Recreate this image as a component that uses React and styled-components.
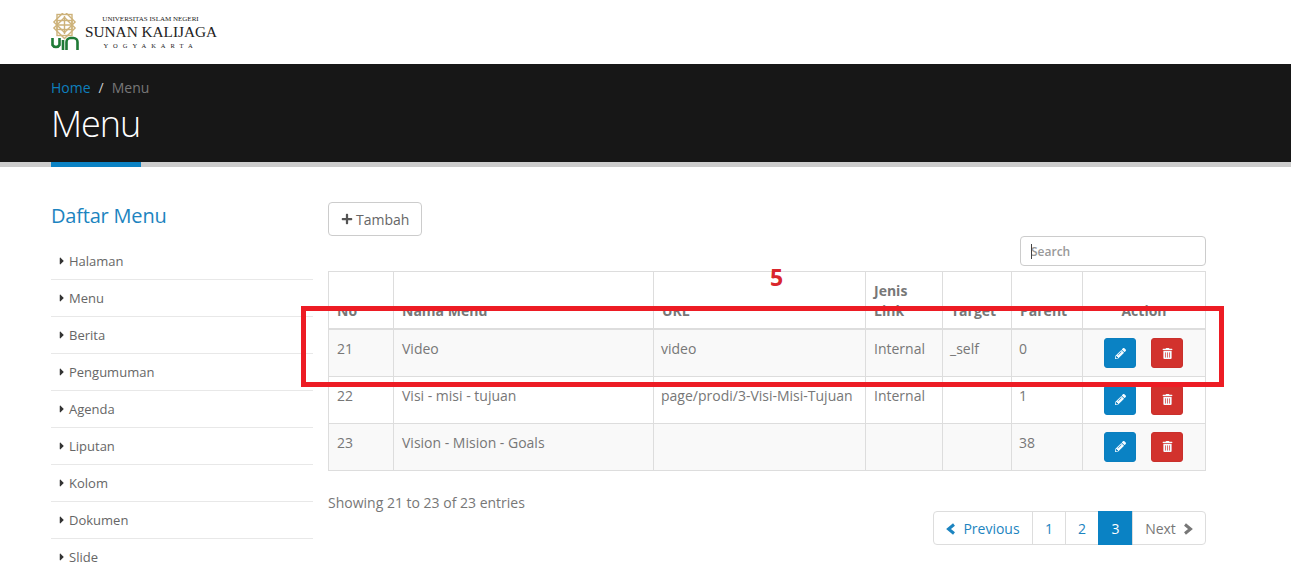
import React from "react";
import styled, { createGlobalStyle } from "styled-components";
import { FaCaretRight, FaPencilAlt, FaPlus, FaTrashAlt } from "react-icons/fa";

const GlobalStyle = createGlobalStyle`
  html, body {
    margin: 0;
    height: 566px;
    overflow: hidden;
    background: #fff;
    font-family: "Open Sans", "Liberation Sans", sans-serif;
    color: #777;
  }
`;

const Page = styled.div`
  position: relative;
  width: 1291px;
  height: 566px;
  overflow: hidden;
`;

const TopBar = styled.header`
  height: 64px;
  padding: 13px 0 0 51px;
  box-sizing: border-box;
  display: flex;
  align-items: flex-start;
  gap: 6px;
`;

const LogoText = styled.div`
  font-family: "Liberation Serif", serif;
  color: #222;
  text-align: center;
  width: 131px;
  padding-top: 1px;
`;

const LogoLine = styled.div`
  font-size: ${(p) => p.$size}px;
  line-height: ${(p) => p.$height}px;
  letter-spacing: ${(p) => p.$spacing || 0}px;
  white-space: nowrap;
`;

const Band = styled.section`
  height: 103px;
  box-sizing: border-box;
  background: #171717;
  border-bottom: 5px solid #ccc;
  padding: 14px 0 0 51px;
`;

const Breadcrumb = styled.div`
  font-size: 14px;
  line-height: 20px;
  color: #777;
  display: flex;
  gap: 8px;
`;

const HomeLink = styled.a`
  color: #0e7fbd;
`;

const Slash = styled.span`
  color: #ccc;
`;

const Title = styled.h1`
  margin: 0;
  width: 90px;
  height: 69px;
  box-sizing: border-box;
  padding-top: 1px;
  border-bottom: 5px solid #0b82c4;
  font-size: 36px;
  line-height: 50px;
  font-weight: 300;
  letter-spacing: -1px;
  color: #fff;
  white-space: nowrap;
`;

const Body = styled.main`
  display: flex;
  padding: 35px 85px 0 51px;
  gap: 15px;
`;

const Sidebar = styled.aside`
  width: 262px;
  flex: none;
`;

const SideTitle = styled.h2`
  margin: 0 0 13px;
  font-size: 20px;
  line-height: 28px;
  font-weight: 400;
  letter-spacing: -0.2px;
  color: #1c84c0;
`;

const SideItem = styled.div`
  height: 37px;
  box-sizing: border-box;
  border-bottom: 1px solid #e8e8e8;
  padding-left: 5px;
  display: flex;
  align-items: center;
  gap: 1px;
  font-size: 13px;
  color: #666;
  svg {
    font-size: 12px;
    color: #333;
  }
`;

const Content = styled.div`
  flex: 1;
  min-width: 0;
`;

const AddButton = styled.button`
  display: flex;
  align-items: center;
  gap: 3px;
  width: 94px;
  height: 34px;
  box-sizing: border-box;
  padding: 0 0 0 12px;
  background: #fff;
  border: 1px solid #ccc;
  border-radius: 4px;
  font: 400 14px "Open Sans", sans-serif;
  color: #666;
  svg {
    font-size: 12px;
    color: #555;
  }
`;

const SearchRow = styled.div`
  display: flex;
  justify-content: flex-end;
  height: 35px;
`;

const SearchWrap = styled.div`
  position: relative;
  width: 186px;
  height: 30px;
`;

const SearchBox = styled.input`
  width: 100%;
  height: 100%;
  box-sizing: border-box;
  padding: 0 10px;
  border: 1px solid #ccc;
  border-radius: 4px;
  background: #fff;
  font: 600 12px "Open Sans", sans-serif;
  &::placeholder {
    color: #999;
    opacity: 1;
  }
`;

const Caret = styled.span`
  position: absolute;
  left: 11px;
  top: 8px;
  width: 1px;
  height: 15px;
  background: #444;
`;

const Table = styled.table`
  width: 877px;
  table-layout: fixed;
  border-collapse: collapse;
  font-size: 14px;
`;

const HeadCell = styled.th`
  width: ${(p) => p.$width}px;
  height: 56px;
  box-sizing: border-box;
  padding: 9px 8px 7px;
  border: 1px solid #ddd;
  border-bottom: 2px solid #ddd;
  line-height: 20px;
  font-weight: 700;
  color: #777;
  text-align: ${(p) => (p.$center ? "center" : "left")};
  vertical-align: bottom;
`;

const Row = styled.tr`
  background: ${(p) => (p.$odd ? "#f9f9f9" : "#fff")};
`;

const Cell = styled.td`
  height: 47px;
  box-sizing: border-box;
  padding: 9px ${(p) => (p.$wide ? 8 : 7)}px;
  border: 1px solid #ddd;
  line-height: 20px;
  vertical-align: top;
  white-space: nowrap;
  color: #777;
`;

const ActionCell = styled(Cell)`
  padding: 8px 0 0 21px;
`;

const Actions = styled.div`
  display: flex;
  gap: 15px;
`;

const IconButton = styled.button`
  width: 32px;
  height: 30px;
  padding: 0;
  border: 1px solid ${(p) => (p.$danger ? "#c9302c" : "#0b7fbf")};
  border-radius: 3px;
  background: ${(p) => (p.$danger ? "#d2322d" : "#0a82c4")};
  color: #f4fbff;
  display: flex;
  align-items: center;
  justify-content: center;
  svg {
    font-size: 11px;
  }
`;

const Footer = styled.div`
  margin-top: 22px;
  height: 18px;
  font-size: 14px;
  line-height: 20px;
`;

const Pagination = styled.nav`
  display: flex;
  justify-content: flex-end;
`;

const PageItem = styled.a`
  display: flex;
  align-items: center;
  justify-content: center;
  gap: 7px;
  width: ${(p) => p.$width}px;
  height: 34px;
  box-sizing: border-box;
  padding-top: 2px;
  margin-left: -1px;
  border: 1px solid ${(p) => (p.$active ? "#0a82c4" : "#ddd")};
  background: ${(p) => (p.$active ? "#0a82c4" : "#fff")};
  color: ${(p) => (p.$active ? "#fff" : p.$muted ? "#777" : "#1c84c0")};
  font-size: 14px;
  border-radius: ${(p) => p.$radius || "0"};
`;

const Annotation = styled.div`
  position: absolute;
  left: 301px;
  top: 306px;
  width: 923px;
  height: 81px;
  box-sizing: border-box;
  border: 5px solid #ed1c24;
`;

const AnnotationLabel = styled.div`
  position: absolute;
  left: 770px;
  top: 261px;
  font-size: 23px;
  line-height: 32px;
  font-weight: 700;
  color: #d9262c;
`;

const menuItems = ["Halaman", "Menu", "Berita", "Pengumuman", "Agenda", "Liputan", "Kolom", "Dokumen", "Slide"];

const columns = [
  { label: "No", width: 65 },
  { label: "Nama Menu", width: 260 },
  { label: "URL", width: 212 },
  { label: "Jenis Link", width: 77 },
  { label: "Target", width: 69 },
  { label: "Parent", width: 71 },
  { label: "Action", width: 123, center: true },
];

const rows = [
  { no: 21, name: "Video", url: "video", type: "Internal", target: "_self", parent: 0 },
  { no: 22, name: "Visi - misi - tujuan", url: "page/prodi/3-Visi-Misi-Tujuan", type: "Internal", target: "", parent: 1 },
  { no: 23, name: "Vision - Mision - Goals", url: "", type: "", target: "", parent: 38 },
];

function LogoMark() {
  return (
    <svg width="28" height="39" viewBox="0 0 28 39">
      <g fill="none" stroke="#cdb27a" strokeWidth="1.4">
        <rect x="6" y="1.5" width="15" height="15" />
        <rect x="6" y="1.5" width="15" height="15" transform="rotate(45 13.5 9)" />
        <rect x="6" y="7.5" width="15" height="15" />
        <rect x="6" y="7.5" width="15" height="15" transform="rotate(45 13.5 15)" />
        <path d="M13.5 3v18M5 12h17" />
      </g>
      <g fill="none" stroke="#1f7a36" strokeWidth="2.6">
        <path d="M1.5 25v7a4 4 0 0 0 7 0v-7" />
        <path d="M12 27v10" />
        <path d="M15.500 37v-8a4 4 0 0 1 4-4h3a4 4 0 0 1 4 4v8" />
      </g>
    </svg>
  );
}

// thicker than the react-icons chevrons, closer to the old FontAwesome glyph
function Chevron({ right }) {
  return (
    <svg width="10" height="12" viewBox="0 0 10 12">
      <path
        d={right ? "M2 1.500L7.500 6L2 10.500" : "M8 1.500L2.500 6L8 10.500"}
        fill="none"
        stroke="currentColor"
        strokeWidth="3"
      />
    </svg>
  );
}

export default function App() {
  return (
    <Page>
      <GlobalStyle />
      <TopBar>
        <LogoMark />
        <LogoText>
          <LogoLine $size={7} $height={10}>UNIVERSITAS ISLAM NEGERI</LogoLine>
          <LogoLine $size={15.3} $height={16}>SUNAN KALIJAGA</LogoLine>
          <LogoLine $size={6.5} $height={11} $spacing={5}>YOGYAKARTA</LogoLine>
        </LogoText>
      </TopBar>
      <Band>
        <Breadcrumb>
          <HomeLink>Home</HomeLink>
          <Slash>/</Slash>
          <span>Menu</span>
        </Breadcrumb>
        <Title>Menu</Title>
      </Band>
      <Body>
        <Sidebar>
          <SideTitle>Daftar Menu</SideTitle>
          {menuItems.map((item) => (
            <SideItem key={item}>
              <FaCaretRight />
              {item}
            </SideItem>
          ))}
        </Sidebar>
        <Content>
          <AddButton>
            <FaPlus />
            Tambah
          </AddButton>
          <SearchRow>
            <SearchWrap>
              <SearchBox placeholder="Search" />
              <Caret />
            </SearchWrap>
          </SearchRow>
          <Table>
            <thead>
              <tr>
                {columns.map((col) => (
                  <HeadCell key={col.label} $width={col.width} $center={col.center}>
                    {col.label}
                  </HeadCell>
                ))}
              </tr>
            </thead>
            <tbody>
              {rows.map((row, i) => (
                <Row key={row.no} $odd={i % 2 === 0}>
                  <Cell $wide>{row.no}</Cell>
                  <Cell $wide>{row.name}</Cell>
                  <Cell>{row.url}</Cell>
                  <Cell $wide>{row.type}</Cell>
                  <Cell>{row.target}</Cell>
                  <Cell>{row.parent}</Cell>
                  <ActionCell>
                    <Actions>
                      <IconButton><FaPencilAlt /></IconButton>
                      <IconButton $danger><FaTrashAlt /></IconButton>
                    </Actions>
                  </ActionCell>
                </Row>
              ))}
            </tbody>
          </Table>
          <Footer>Showing 21 to 23 of 23 entries</Footer>
          <Pagination>
            <PageItem $width={100} $radius="4px 0 0 4px"><Chevron />Previous</PageItem>
            <PageItem $width={34}>1</PageItem>
            <PageItem $width={34}>2</PageItem>
            <PageItem $width={35} $active>3</PageItem>
            <PageItem $width={74} $muted $radius="0 4px 4px 0">Next<Chevron right /></PageItem>
          </Pagination>
        </Content>
      </Body>
      <Annotation />
      <AnnotationLabel>5</AnnotationLabel>
    </Page>
  );
}
